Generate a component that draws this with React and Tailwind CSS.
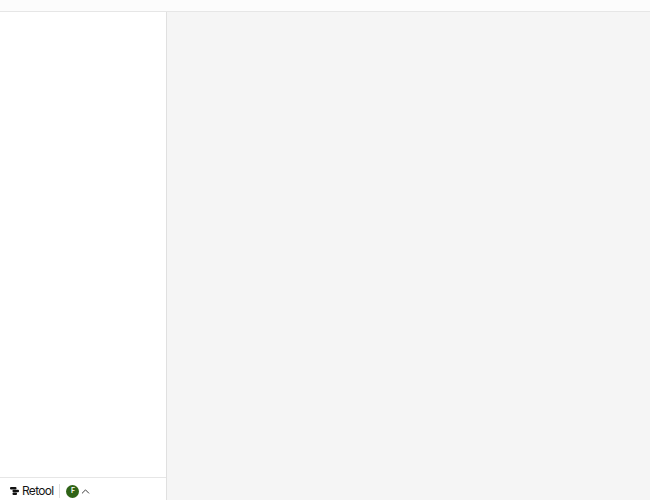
import React from 'react';
import { ChevronUp } from 'lucide-react';

const RetoolLogo = () => (
  <svg width="9" height="8" viewBox="0 0 9 8" fill="#111111">
    <rect x="0" y="0" width="6.5" height="2.5" rx="1" />
    <rect x="2.5" y="2.8" width="6.5" height="2.5" rx="1" />
    <rect x="2.5" y="5.6" width="4.5" height="2.4" rx="1" />
  </svg>
);

const App = () => {
  return (
    <div className="flex flex-col w-[650px] h-[500px] bg-white overflow-hidden font-['Inter',sans-serif]">
      <div className="h-3 shrink-0 bg-[#fcfcfc] border-b border-[#e6e6e6]" />
      <div className="flex flex-1 min-h-0">
        <aside className="flex flex-col w-[167px] shrink-0 bg-white border-r border-[#e0e0e0]">
          <div className="flex-1" />
          <div className="flex items-center h-[23px] pt-[4px] pl-[10px] border-t border-[#e6e6e6]">
            <RetoolLogo />
            <span className="ml-[3px] text-[12px] leading-none tracking-[-0.7px] text-[#151515]">Retool</span>
            <div className="w-px h-[14px] ml-[6px] bg-[#e0e0e0]" />
            <div className="flex items-center justify-center w-[13px] h-[13px] ml-[6px] rounded-full bg-[#2f6317] text-[7px] font-semibold text-white">
              F
            </div>
            <ChevronUp className="w-[13px] h-[13px] text-[#333333]" strokeWidth={1.75} />
          </div>
        </aside>
        <main className="flex-1 bg-[#f5f5f5]" />
      </div>
    </div>
  );
};

export default App;
